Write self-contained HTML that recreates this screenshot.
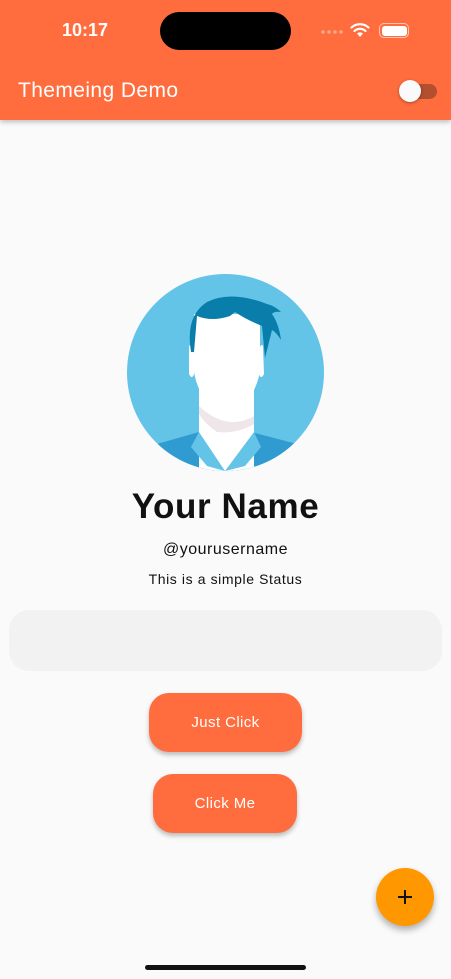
<!DOCTYPE html>
<html><head><meta charset="utf-8"><style>
*{margin:0;padding:0;box-sizing:border-box}
body{width:451px;height:979px;background:#fafafa;font-family:"Liberation Sans",sans-serif;position:relative;overflow:hidden}
.bar{position:absolute;left:0;top:0;width:451px;height:120px;background:#ff6d3f;box-shadow:0 2px 5px rgba(0,0,0,.25)}
.abs{position:absolute}
.btn{position:absolute;background:#ff6d3f;color:#fff;border-radius:20px;font-size:15px;letter-spacing:.4px;display:flex;align-items:center;justify-content:center;box-shadow:0 3px 5px rgba(0,0,0,.25)}
</style></head><body>
<div class="bar">
 <div class="abs" style="left:62px;top:20px;color:#fff;font-weight:bold;font-size:18px">10:17</div>
 <div class="abs" style="left:160px;top:12px;width:131px;height:38px;border-radius:19px;background:#000"></div>
 <div class="abs" style="left:320px;top:30px;width:24px;height:4px;background:radial-gradient(circle,rgba(255,255,255,.4) 1.5px,transparent 2px) 0 0/6px 4px"></div>
 <svg class="abs" style="left:350px;top:22px" width="20" height="16" viewBox="0 0 20 16"><path d="M10 15l3-3.5a4.5 4.5 0 0 0-6 0z" fill="#fff"/><path d="M4.5 9a8 8 0 0 1 11 0M1.5 5.5a12.5 12.5 0 0 1 17 0" stroke="#fff" stroke-width="2.2" fill="none" stroke-linecap="round"/></svg>
 <div class="abs" style="left:379px;top:23px;width:30px;height:15px;border:1.5px solid rgba(255,255,255,.6);border-radius:5px;padding:1.5px"><div style="width:100%;height:100%;background:#fff;border-radius:3px"></div></div>
 <div class="abs" style="left:18px;top:79px;color:#fff;font-size:21px;letter-spacing:.4px">Themeing Demo</div>
 <div class="abs" style="left:401px;top:84px;width:36px;height:15px;border-radius:8px;background:#b24f2e"></div>
 <div class="abs" style="left:399px;top:80px;width:22px;height:22px;border-radius:50%;background:#fafafa;box-shadow:0 1px 3px rgba(0,0,0,.35)"></div>
</div>
<svg class="abs" style="left:127px;top:274px" width="197" height="197" viewBox="0 0 197 197">
 <defs><clipPath id="c"><circle cx="98.5" cy="98.5" r="98.5"/></clipPath></defs>
 <circle cx="98.5" cy="98.5" r="98.5" fill="#63c4e8"/>
 <g clip-path="url(#c)">
  <path d="M0 197L30 170 72 158 98 197 124 158 170 170 197 197z" fill="#2f9bd0"/>
  <rect x="72" y="110" width="55" height="90" fill="#fff"/>
  <path d="M72 158L98 197 80 192 64 173z M127 158L98 197 118 192 134 173z" fill="#63c4e8"/>
  <path d="M72 132Q100 158 127 142L127 150Q110 160 90 158Q78 150 72 140z" fill="#efe6ea"/>
  <path d="M62 72Q66 68 67 80L67 100Q65 106 62 100z M136 72Q133 68 132 80L132 100Q134 106 137 100z" fill="#fff"/>
  <path d="M67 40L67 98Q72 128 100 146Q127 128 133 98L133 40Z" fill="#fff"/>
  <path d="M64 78Q58 42 80 28Q104 16 140 30Q148 32 154 38Q147 37 145 40Q152 50 154 66Q149 58 145 56L138 84L135 52Q120 46 108 38L103 42Q85 48 70 42L67 78Z" fill="#0a7eab"/>
 </g>
</svg>
<div class="abs" style="left:0;width:451px;top:487px;text-align:center;font-weight:bold;font-size:35px;letter-spacing:.6px;color:#111">Your Name</div>
<div class="abs" style="left:0;width:451px;top:541px;text-align:center;font-size:16px;letter-spacing:.5px;color:#111">@yourusername</div>
<div class="abs" style="left:0;width:451px;top:571px;text-align:center;font-size:14px;letter-spacing:.6px;color:#111">This is a simple Status</div>
<div class="abs" style="left:9px;top:610px;width:433px;height:61px;border-radius:20px;background:#f2f2f2"></div>
<div class="btn" style="left:149px;top:693px;width:153px;height:59px">Just Click</div>
<div class="btn" style="left:153px;top:774px;width:144px;height:59px">Click Me</div>
<div class="abs" style="left:376px;top:868px;width:58px;height:58px;border-radius:50%;background:#ff9800;box-shadow:0 4px 7px rgba(0,0,0,.3)"></div>
<svg class="abs" style="left:395px;top:887px" width="20" height="20"><path d="M10 3v14M3 10h14" stroke="#111" stroke-width="2"/></svg>
<div class="abs" style="left:145px;top:965px;width:161px;height:5px;border-radius:3px;background:#111"></div>
</body></html>
